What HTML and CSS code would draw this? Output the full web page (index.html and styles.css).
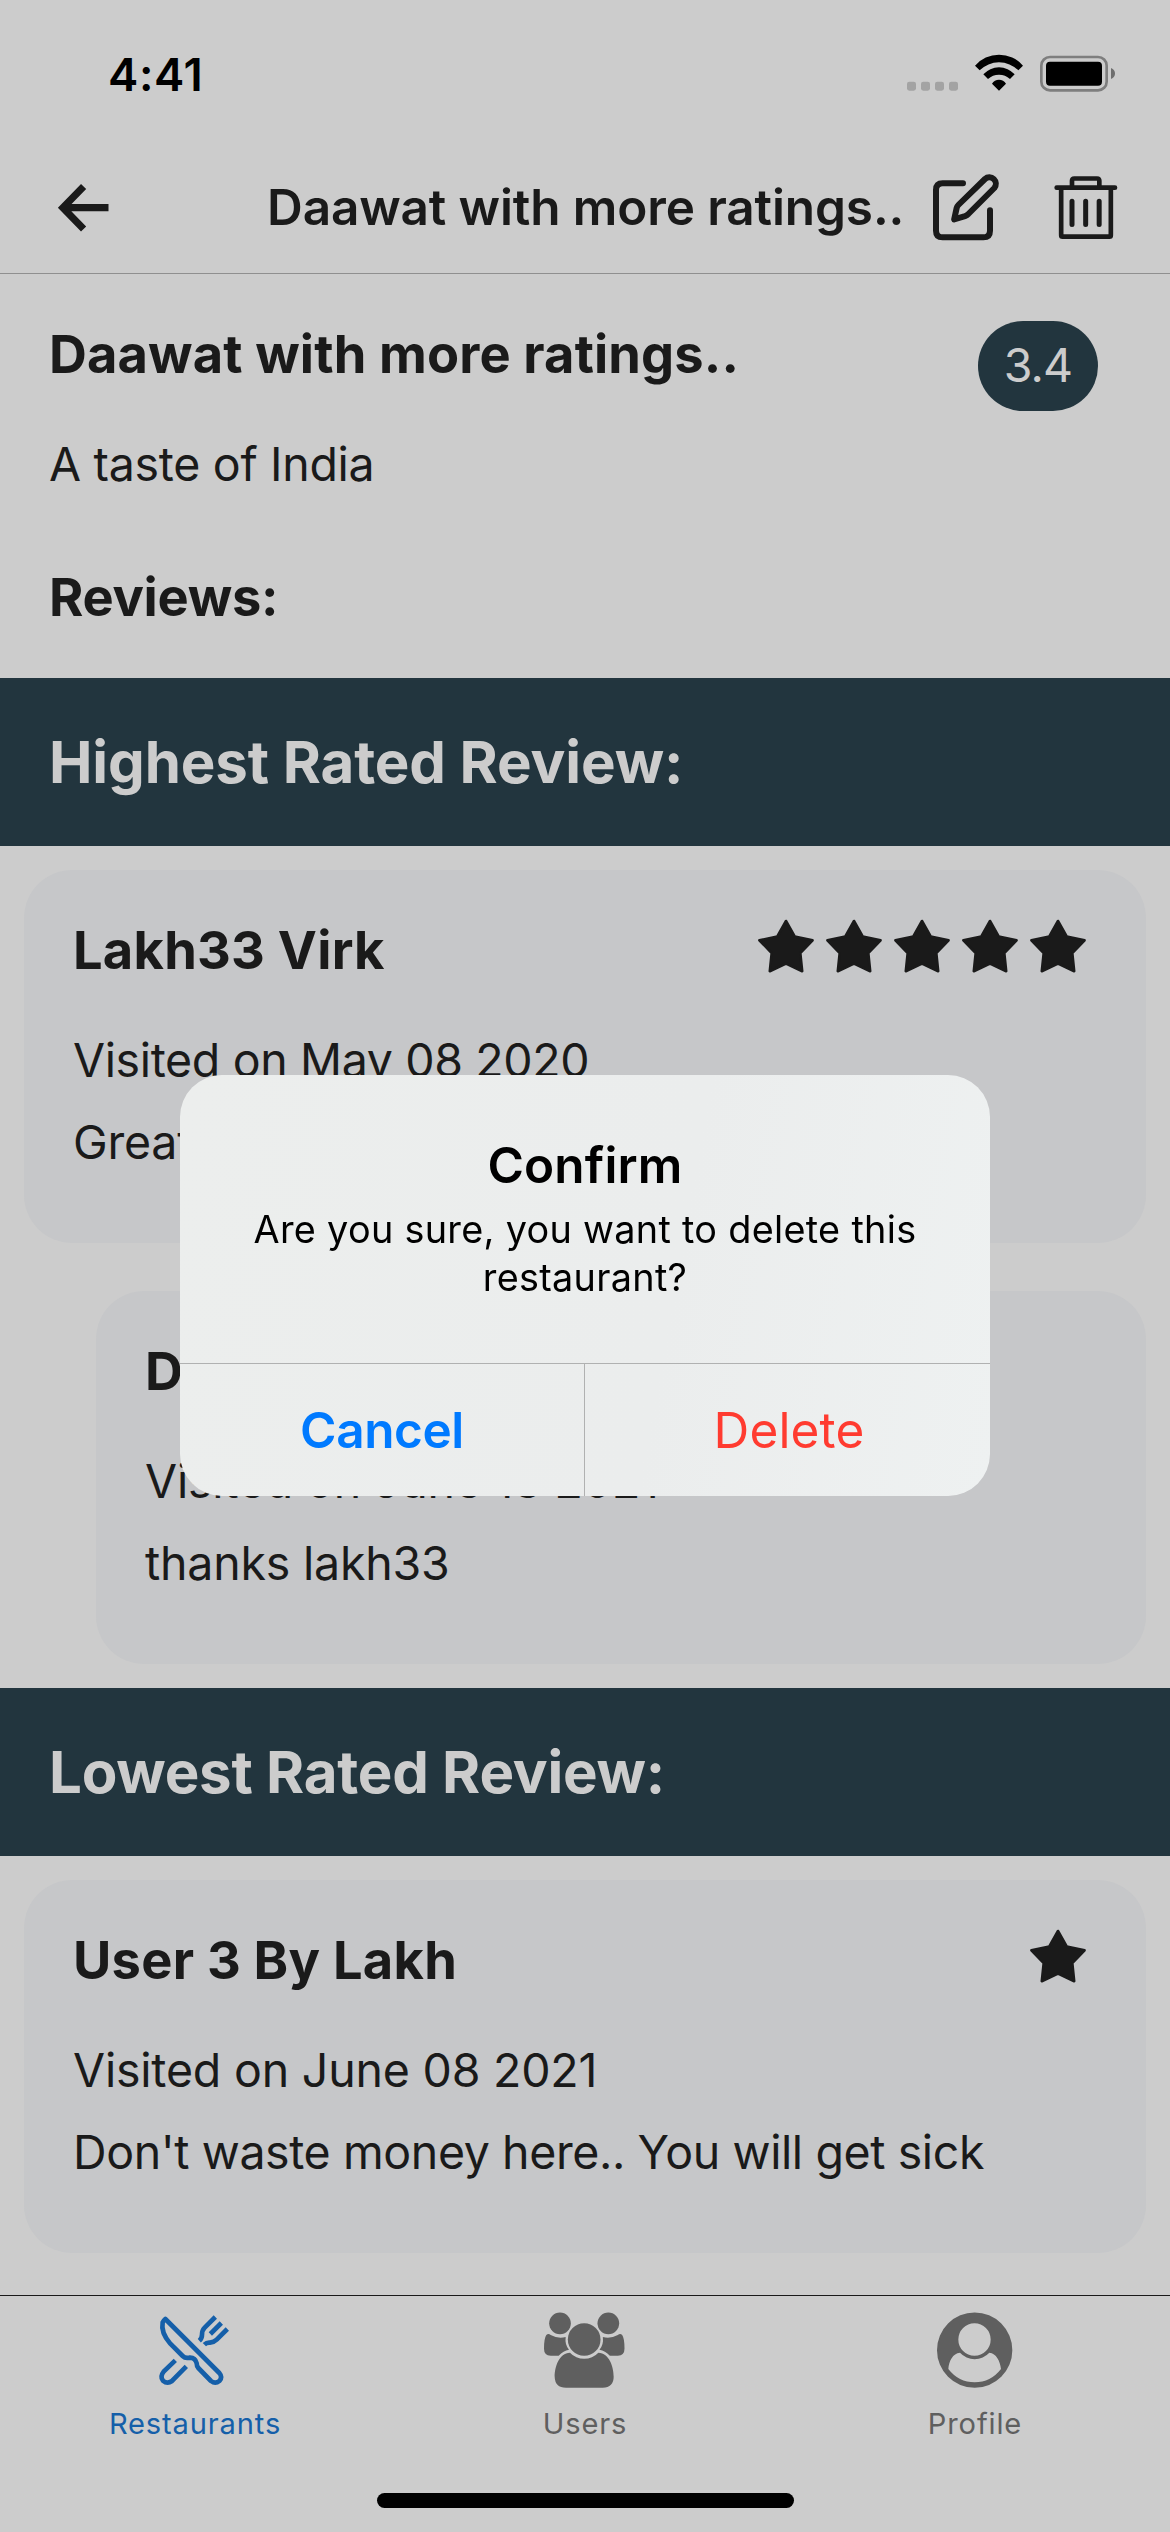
FILE: index.html
```html
<!DOCTYPE html>
<html lang="en">
<head>
<meta charset="utf-8">
<title>Daawat with more ratings..</title>
<link rel="stylesheet" href="styles.css">
</head>
<body>
<svg class="defs" aria-hidden="true">
  <symbol id="star" viewBox="0 0 68 60">
    <path d="M34 5 L42.700 20.500 L60.600 24.300 L48.300 37 L50.200 55.200 L34 47.600 L17.800 55.200 L19.700 37 L7.400 24.300 L25.300 20.500Z" fill="currentColor" stroke="currentColor" stroke-width="2.6" stroke-linejoin="round"/>
  </symbol>
</svg>
<div class="app">
  <header class="status">
    <span class="time">4:41</span>
    <svg class="status-icons" viewBox="135 70 636 120" width="212" height="40">
      <g fill="#a3a3a3">
        <rect x="141" y="156" width="27" height="27" rx="7"/><rect x="183" y="156" width="27" height="27" rx="7"/>
        <rect x="225" y="156" width="27" height="27" rx="7"/><rect x="267" y="156" width="27" height="27" rx="7"/>
      </g>
      <path d="M345 108A95 95 0 0 1 489 108L475 122A82 82 0 0 0 359 122ZM370 134A63 63 0 0 1 464 134L450 148A48.400 48.400 0 0 0 384 148ZM396 162A24.600 24.600 0 0 1 438 162L417 183Z"/>
      <rect x="544" y="82" width="196" height="100" rx="26" fill="none" stroke="#7e7e7e" stroke-width="8"/>
      <rect x="558" y="96" width="168" height="72" rx="12"/>
      <path d="M753 115Q765 120 765 131.500Q765 143 753 148Z" fill="#6e6e6e"/>
    </svg>
  </header>
  <nav class="navbar">
    <svg class="back" viewBox="54 180 60 56" width="60" height="56" fill="none" stroke="currentColor" stroke-width="7.200">
      <path d="M83.600 186.500L62.900 207.700L83.600 229M62 207.700H108.500"/>
    </svg>
    <h2 class="nav-title">Daawat with more ratings..</h2>
    <div class="actions">
      <svg viewBox="210 425 216 210" width="72" height="70" fill="none" stroke="currentColor" stroke-width="18" stroke-linecap="round" stroke-linejoin="round">
        <path d="M309 459H248Q228 459 228 479V601Q228 621 248 621H370Q390 621 390 601V540"/>
        <path d="M282.500 567L290 533Q291 528 295 524L375 446A19.500 19.500 0 0 1 403 473L325 551Q321 555.500 315 557.500Z"/>
      </svg>
      <svg viewBox="580 430 198 200" width="66" height="67" fill="none" stroke="currentColor" stroke-width="14" stroke-linecap="round" stroke-linejoin="round">
        <path d="M591 470.500H766M604.500 472V613Q604.500 617.500 609 617.500H749Q753.500 617.500 753.500 613V472M637 470V450Q637 443 644 443H712Q719 443 719 450V470"/>
        <path d="M637 511.500V581M678 511.500V581M718.500 511.500V581" stroke-width="15"/>
      </svg>
    </div>
  </nav>
  <main class="content">
    <section class="info">
      <div class="summary">
        <div>
          <h1 class="bold-title name">Daawat with more ratings..</h1>
          <p class="text tagline">A taste of India</p>
        </div>
        <span class="badge">3.4</span>
      </div>
      <h3 class="bold-title reviews">Reviews:</h3>
    </section>
    <h2 class="banner">Highest Rated Review:</h2>
    <article class="card">
      <div class="card-head">
        <h3 class="bold-title spaced">Lakh33 Virk</h3>
        <div class="stars"><svg><use href="#star"/></svg><svg><use href="#star"/></svg><svg><use href="#star"/></svg><svg><use href="#star"/></svg><svg><use href="#star"/></svg></div>
      </div>
      <p class="text visited">Visited on May 08 2020</p>
      <p class="text comment">Great</p>
    </article>
    <article class="card reply">
      <div class="card-head"><h3 class="bold-title">D</h3></div>
      <p class="text visited june">Visited on June 13 2021</p>
      <p class="text comment">thanks lakh33</p>
    </article>
    <h2 class="banner lowest">Lowest Rated Review:</h2>
    <article class="card">
      <div class="card-head">
        <h3 class="bold-title spaced">User 3 By Lakh</h3>
        <div class="stars"><svg><use href="#star"/></svg></div>
      </div>
      <p class="text visited june">Visited on June 08 2021</p>
      <p class="text comment long">Don't waste money here.. You will get sick</p>
    </article>
  </main>
  <footer class="tabbar">
    <div class="tabs">
      <div class="tab active">
        <svg viewBox="210 90 270 240" width="90" height="80" fill="none" stroke="currentColor" stroke-width="14">
          <path d="M256 117L418 279Q429 292 418 303Q406 313 393 303L355 264Q350 259 350 250Q346 232 328 233Q316 236 308 228L271 191Q242 158 248 127Q250 122 256 117Z" stroke-linejoin="round"/>
          <path d="M286 241L251 275Q239 290 249 302Q262 313 276 303L319 259"/>
          <path d="M406 111L374 143Q366 151 366 164Q366 175 358 182M442 147L410 179Q402 187 390 188Q380 187 373 194M424 129L391 162"/>
        </svg>
        <span>Restaurants</span>
      </div>
      <div class="tab">
        <svg viewBox="120 90 270 240" width="90" height="80" fill="currentColor">
          <circle cx="180" cy="130" r="32.500"/><circle cx="325" cy="130" r="32.500"/><circle cx="252.500" cy="178.500" r="49"/>
          <path id="side" d="M139 165Q145 159 152 165Q174 177 197 171Q194 194 207 209Q190 212 176 227H152Q132 226 132 206Q132 175 139 165Z"/>
          <use href="#side" transform="translate(505.500 0) scale(-1 1)"/>
          <path d="M210 218C177 218 164 262 164 290Q165 323 198 323H308Q341 322 341 290C341 262 328 218 295 218A58 58 0 0 1 210 218Z"/>
        </svg>
        <span>Users</span>
      </div>
      <div class="tab">
        <svg viewBox="150 90 270 240" width="90" height="80" fill="currentColor" fill-rule="evenodd">
          <path d="M171 210.500A113 113 0 1 1 397 210.500A113 113 0 1 1 171 210.500ZM235 178.500A48.500 49 0 1 0 332 178.500A48.500 49 0 1 0 235 178.500ZM240 218.500C218 220 207 244 205 267Q236 307 284 307Q332 307 363 267C360 244 349 220 328 218.500A60 60 0 0 1 240 218.500Z"/>
        </svg>
        <span>Profile</span>
      </div>
    </div>
    <div class="home-indicator"></div>
  </footer>
</div>
<div class="overlay">
  <div class="dialog" role="alertdialog">
    <div class="dialog-body">
      <h2>Confirm</h2>
      <p>Are you sure, you want to delete this restaurant?</p>
    </div>
    <div class="dialog-actions">
      <button class="cancel">Cancel</button>
      <button class="delete">Delete</button>
    </div>
  </div>
</div>
</body>
</html>
```
FILE: styles.css
```css
* { box-sizing: border-box; margin: 0; padding: 0; }

body {
  width: 1170px;
  height: 2532px;
  overflow: hidden;
  background: #ccc;
  color: #1a1a1a;
  font-family: Inter, "Liberation Sans", sans-serif;
}

svg { display: block; flex: none; }
.defs { position: absolute; width: 0; height: 0; }

.app { display: flex; flex-direction: column; height: 2532px; }

.status {
  display: flex;
  justify-content: space-between;
  align-items: flex-start;
  height: 142px;
  padding: 48px 53px 0 108px;
  color: #000;
}
.time { font-size: 45.5px; font-weight: 600; line-height: 54px; letter-spacing: .6px; }
.status-icons { margin-top: 5px; }

.navbar {
  display: flex;
  align-items: center;
  height: 132px;
  padding: 0 51px 0 54px;
  border-bottom: 1px solid #8f8f8f;
}
.nav-title {
  margin-left: 153px;
  padding-bottom: 2px;
  font-size: 49.5px;
  font-weight: 600;
  line-height: 60px;
  letter-spacing: -.12px;
  white-space: nowrap;
}
.actions { display: flex; align-items: center; gap: 51px; margin-left: auto; padding-bottom: 1px; }

.content { flex: 1; min-height: 0; overflow: hidden; }

.bold-title { font-size: 52.4px; font-weight: 700; line-height: 65px; white-space: nowrap; }
.spaced { letter-spacing: .25px; }
.text { font-size: 46.5px; line-height: 58px; letter-spacing: -.3px; }

.info { height: 404px; padding: 48px 72px 48px 49px; }
.summary { display: flex; justify-content: space-between; align-items: flex-start; }
.name { letter-spacing: .15px; }
.tagline { margin-top: 48px; letter-spacing: -.3px; }
.reviews { margin-top: 72px; letter-spacing: -.29px; }
.badge {
  width: 120px;
  height: 90px;
  margin-top: -1px;
  border-radius: 45px;
  background: #22353e;
  color: #ccc;
  font-size: 46.5px;
  line-height: 89px;
  letter-spacing: -.8px;
  text-align: center;
}

.banner {
  height: 168px;
  padding-left: 49px;
  background: #22353e;
  color: #ccc;
  font-size: 58.2px;
  font-weight: 700;
  line-height: 169px;
  letter-spacing: -.11px;
}
.lowest { letter-spacing: -.25px; }

.card {
  height: 373px;
  margin: 24px 24px 48px;
  padding: 48px 48px 48px 49px;
  border-radius: 48px;
  background: #c6c7c9;
}
.reply { margin-left: 96px; margin-bottom: 24px; }
.card-head { display: flex; justify-content: space-between; height: 65px; }
.stars { display: flex; margin-right: 6px; }
.stars svg { width: 68px; height: 60px; margin-top: -2px; }
.visited { margin-top: 48px; letter-spacing: -.36px; }
.comment { margin-top: 24px; letter-spacing: -.21px; }
.june { letter-spacing: -.2px; }
.long { letter-spacing: -.4px; white-space: nowrap; }

.tabbar {
  display: flex;
  flex-direction: column;
  align-items: center;
  justify-content: space-between;
  height: 237px;
  padding: 14px 0 24px;
  border-top: 1px solid #1a1a1a;
}
.tabs { display: grid; grid-template-columns: repeat(3, 1fr); width: 100%; }
.tab {
  display: flex;
  flex-direction: column;
  align-items: center;
  gap: 16px;
  color: #5f5f5f;
  font-size: 29.1px;
  line-height: 36px;
  letter-spacing: .85px;
}
.tab.active { color: #155fa9; }
.home-indicator { width: 417px; height: 15px; border-radius: 8px; background: #000; }

.overlay {
  position: fixed;
  top: 0;
  left: 0;
  width: 1170px;
  height: 2532px;
  padding-top: 1075px;
}
.dialog {
  display: flex;
  flex-direction: column;
  width: 810px;
  height: 421px;
  margin: 0 auto;
  overflow: hidden;
  border-radius: 42px;
  background: linear-gradient(100deg, #eceeed, #ebeded 60%, #eef1f1);
  color: #000;
  text-align: center;
}
.dialog-body { flex: 1; padding: 59px 60px 0; }
.dialog-body h2 { font-size: 49.5px; font-weight: 600; line-height: 62px; letter-spacing: .16px; }
.dialog-body p { margin-top: 9px; font-size: 37.8px; line-height: 48px; letter-spacing: .3px; }
.dialog-actions { display: grid; grid-template-columns: 1fr 1fr; height: 133px; border-top: 1px solid #b0b1b1; }
.dialog-actions button { border: 0; background: none; font: 400 49.5px/132px Inter, "Liberation Sans", sans-serif; }
.dialog-actions .cancel { border-right: 1px solid #b0b1b1; color: #007aff; font-weight: 600; letter-spacing: -.4px; }
.dialog-actions .delete { padding-left: 3px; color: #ff3b30; letter-spacing: .17px; }
```
